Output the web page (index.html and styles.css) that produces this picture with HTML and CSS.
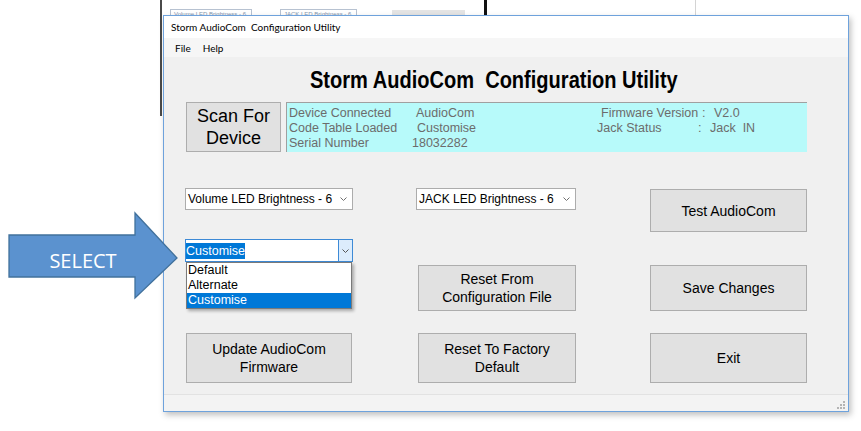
FILE: index.html
```html
<!DOCTYPE html>
<html lang="en">
<head>
    <meta charset="UTF-8">
    <meta name="viewport" content="width=device-width, initial-scale=1.0">
    <title>Storm AudioCom Configuration Utility</title>
    <link rel="stylesheet" href="styles.css">
</head>
<body>

    <div class="desktop">
        <!-- window behind, only its lower edge shows -->
        <div class="back-tab tab-one">Volume LED Brightness - 6</div>
        <div class="back-tab tab-two">JACK LED Brightness - 6</div>
        <div class="back-bar"></div>
        <div class="back-line"></div>
        <div class="back-rule"></div>
        <div class="back-edge"></div>

        <div class="window">
            <div class="titlebar">Storm AudioCom&nbsp; Configuration Utility</div>
            <div class="menubar">
                <span class="menu-item">File</span>
                <span class="menu-item">Help</span>
            </div>

            <div class="client">
                <h1 class="heading">Storm AudioCom&nbsp; Configuration Utility</h1>

                <div class="top-row">
                    <button class="btn scan-btn">Scan For<br>Device</button>
                    <div class="info-panel">
                        <span>Device Connected</span>
                        <span>AudioCom</span>
                        <span>Firmware Version</span>
                        <span>:</span>
                        <span>V2.0</span>

                        <span>Code Table Loaded</span>
                        <span class="nudge-r">Customise</span>
                        <span class="shift">Jack Status</span>
                        <span class="shift">:</span>
                        <span class="shift keep">Jack  IN</span>

                        <span>Serial Number</span>
                        <span class="shift">18032282</span>
                    </div>
                </div>

                <div class="controls">
                    <div class="select-box vol-box">
                        <span>Volume LED Brightness - 6</span>
                        <svg class="chevron" width="7" height="4" viewBox="0 0 7 4"><path d="M0.5 0.5 L3.5 3.5 L6.5 0.5" fill="none" stroke="#707070" stroke-width="1"/></svg>
                    </div>
                    <div class="select-box jack-box">
                        <span>JACK LED Brightness - 6</span>
                        <svg class="chevron" width="7" height="4" viewBox="0 0 7 4"><path d="M0.5 0.5 L3.5 3.5 L6.5 0.5" fill="none" stroke="#707070" stroke-width="1"/></svg>
                    </div>
                    <button class="btn col3-btn test-btn">Test AudioCom</button>

                    <div class="combo">
                        <span class="combo-text"><span class="picked">Customise</span></span>
                        <span class="combo-arrow">
                            <svg width="7" height="4" viewBox="0 0 7 4"><path d="M0.5 0.5 L3.5 3.5 L6.5 0.5" fill="none" stroke="#555" stroke-width="1"/></svg>
                        </span>
                        <ul class="combo-list">
                            <li>Default</li>
                            <li>Alternate</li>
                            <li class="active">Customise</li>
                        </ul>
                    </div>
                    <button class="btn col2-btn low-btn">Reset From<br>Configuration File</button>
                    <button class="btn col3-btn low-btn">Save Changes</button>

                    <button class="btn col1-btn">Update AudioCom<br>Firmware</button>
                    <button class="btn col2-btn">Reset To Factory<br>Default</button>
                    <button class="btn col3-btn">Exit</button>
                </div>
            </div>

            <div class="status-strip">
                <svg width="8" height="8" viewBox="0 0 8 8">
                    <rect x="6" y="0" width="2" height="2" fill="#b4b4b4"/>
                    <rect x="3" y="3" width="2" height="2" fill="#b4b4b4"/>
                    <rect x="6" y="3" width="2" height="2" fill="#b4b4b4"/>
                    <rect x="0" y="6" width="2" height="2" fill="#b4b4b4"/>
                    <rect x="3" y="6" width="2" height="2" fill="#b4b4b4"/>
                    <rect x="6" y="6" width="2" height="2" fill="#b4b4b4"/>
                </svg>
            </div>
        </div>

        <!-- callout arrow pasted over the screenshot -->
        <svg class="select-arrow" width="172" height="90" viewBox="0 0 172 90">
            <polygon points="1,24 127,24 127,2 169,47 127,87 127,66 1,66" fill="#5b92cf" stroke="#41719c" stroke-width="1.3"/>
            <text x="75" y="57" text-anchor="middle" class="arrow-text">SELECT</text>
        </svg>
    </div>

</body>
</html>
```

FILE: styles.css
```css
body {
    margin: 0;
    padding: 0;
    background-color: #fff;
    font-family: "Liberation Sans", Arial, sans-serif;
}

.desktop {
    position: relative;
    width: 861px;
    height: 431px;
    overflow: hidden;
    background-color: #fff;
}

/* bits of the window behind */
.back-tab {
    position: absolute;
    top: 9px;
    height: 7px;
    padding-left: 3px;
    border: 1px solid #b7c2d1;
    border-bottom: none;
    font-size: 6px;
    line-height: 8px;
    color: #8394ac;
    overflow: hidden;
    white-space: nowrap;
    box-sizing: border-box;
}

.tab-one {
    left: 170px;
    width: 82px;
}

.tab-two {
    left: 280px;
    width: 77px;
}

.back-bar {
    position: absolute;
    left: 392px;
    top: 10px;
    width: 73px;
    height: 5px;
    background-color: #e4e4e4;
}

.back-line {
    position: absolute;
    left: 484px;
    top: 0;
    width: 3px;
    height: 15px;
    background-color: #111;
}

.back-rule {
    position: absolute;
    left: 695px;
    top: 0;
    width: 1px;
    height: 15px;
    background-color: #d4d4d4;
}

.back-edge {
    position: absolute;
    left: 160px;
    top: 0;
    width: 2px;
    height: 116px;
    background-color: #4a4a4a;
}

/* the application window */
.window {
    position: absolute;
    left: 163px;
    top: 15px;
    width: 686px;
    height: 397px;
    box-sizing: border-box;
    border: 1px solid #6ea2dc;
    background-color: #f0f0f0;
    box-shadow: 2px 3px 6px rgba(0, 0, 0, 0.25);
    display: flex;
    flex-direction: column;
}

.titlebar {
    height: 22px;
    line-height: 22px;
    padding-left: 7px;
    background-color: #fff;
    font-family: Lato, "Liberation Sans", sans-serif;
    font-size: 10px;
    color: #000;
}

.menubar {
    height: 19px;
    display: flex;
    align-items: center;
    padding-left: 5px;
    background-color: #f6f6f6;
    font-family: Lato, "Liberation Sans", sans-serif;
    font-size: 10px;
}

.menu-item {
    padding: 0 6px;
}

.client {
    flex: 1;
    background-color: #f0f0f0;
}

.heading {
    margin: 9px 0 0 146px;
    font-size: 24px;
    line-height: 28px;
    font-weight: bold;
    color: #000;
    white-space: nowrap;
    transform: scaleX(0.835);
    transform-origin: left center;
}

.top-row {
    display: flex;
    gap: 5px;
    margin: 8px 0 0 22px;
    height: 50px;
}

.btn {
    background-color: #e1e1e1;
    border: 1px solid #adadad;
    border-radius: 0;
    padding: 0;
    font-family: "Liberation Sans", Arial, sans-serif;
    font-size: 14px;
    line-height: 18px;
    color: #000;
    box-sizing: border-box;
}

.scan-btn {
    width: 95px;
    height: 50px;
    font-size: 18px;
    line-height: 22px;
}

.info-panel {
    width: 521px;
    height: 50px;
    box-sizing: border-box;
    border-top: 1px solid #a0a0a0;
    border-left: 1px solid #a0a0a0;
    background-color: #b7fafa;
    padding: 3px 0 0 2px;
    display: grid;
    grid-template-columns: 127px 185px 101px 12px auto;
    grid-auto-rows: 15px;
    font-size: 12.5px;
    line-height: 15px;
    color: #6c6c6c;
    white-space: nowrap;
}

.shift {
    margin-left: -4px;
}

.nudge-r {
    margin-left: 1px;
}

.keep {
    white-space: pre;
}

/* combo boxes and buttons */
.controls {
    display: grid;
    grid-template-columns: 231px 234px 157px;
    grid-template-rows: 51px 94px 50px;
    margin: 36px 0 0 21px;
    align-items: start;
}

.select-box {
    height: 22px;
    box-sizing: border-box;
    border: 1px solid #acacac;
    background-color: #fff;
    display: flex;
    align-items: center;
    justify-content: space-between;
    padding: 0 5px 0 2px;
    font-size: 12px;
    color: #000;
    white-space: nowrap;
}

.vol-box {
    width: 168px;
}

.jack-box {
    width: 160px;
}

.chevron {
    flex-shrink: 0;
}

.col1-btn {
    width: 166px;
    height: 50px;
    margin-left: 1px;
}

.col2-btn {
    width: 158px;
    height: 50px;
    margin-left: 2px;
}

.col3-btn {
    width: 157px;
    height: 50px;
}

.test-btn {
    height: 43px;
    margin-top: 1px;
}

.low-btn {
    height: 46px;
    margin-top: 26px;
}

.combo {
    position: relative;
    width: 168px;
    height: 23px;
    box-sizing: border-box;
    border: 1px solid #3d8ad6;
    background-color: #fff;
    display: flex;
    font-size: 12.5px;
}

.combo-text {
    flex: 1;
    display: flex;
    align-items: center;
}

.picked {
    background-color: #0078d7;
    color: #fff;
    line-height: 16px;
}

.combo-arrow {
    width: 13px;
    border-left: 1px solid #3d8ad6;
    background-color: #dcecfc;
    display: flex;
    align-items: center;
    justify-content: center;
}

.combo-list {
    position: absolute;
    top: 22px;
    left: 0;
    width: 166px;
    margin: 0;
    padding: 0;
    list-style: none;
    box-sizing: border-box;
    border: 1px solid #7a7a7a;
    background-color: #fff;
    box-shadow: 2px 2px 3px rgba(0, 0, 0, 0.3);
}

.combo-list li {
    height: 15px;
    line-height: 15px;
    padding-left: 1px;
    color: #000;
}

.combo-list li.active {
    background-color: #0078d7;
    color: #fff;
}

.status-strip {
    height: 17px;
    box-sizing: border-box;
    border-top: 1px solid #e2e2e2;
    background-color: #f3f3f3;
    display: flex;
    justify-content: flex-end;
    align-items: flex-end;
    padding: 0 3px 2px 0;
}

.select-arrow {
    position: absolute;
    left: 8px;
    top: 211px;
}

.arrow-text {
    font-family: "Open Sans", sans-serif;
    font-size: 20px;
    fill: #fff;
}
```
